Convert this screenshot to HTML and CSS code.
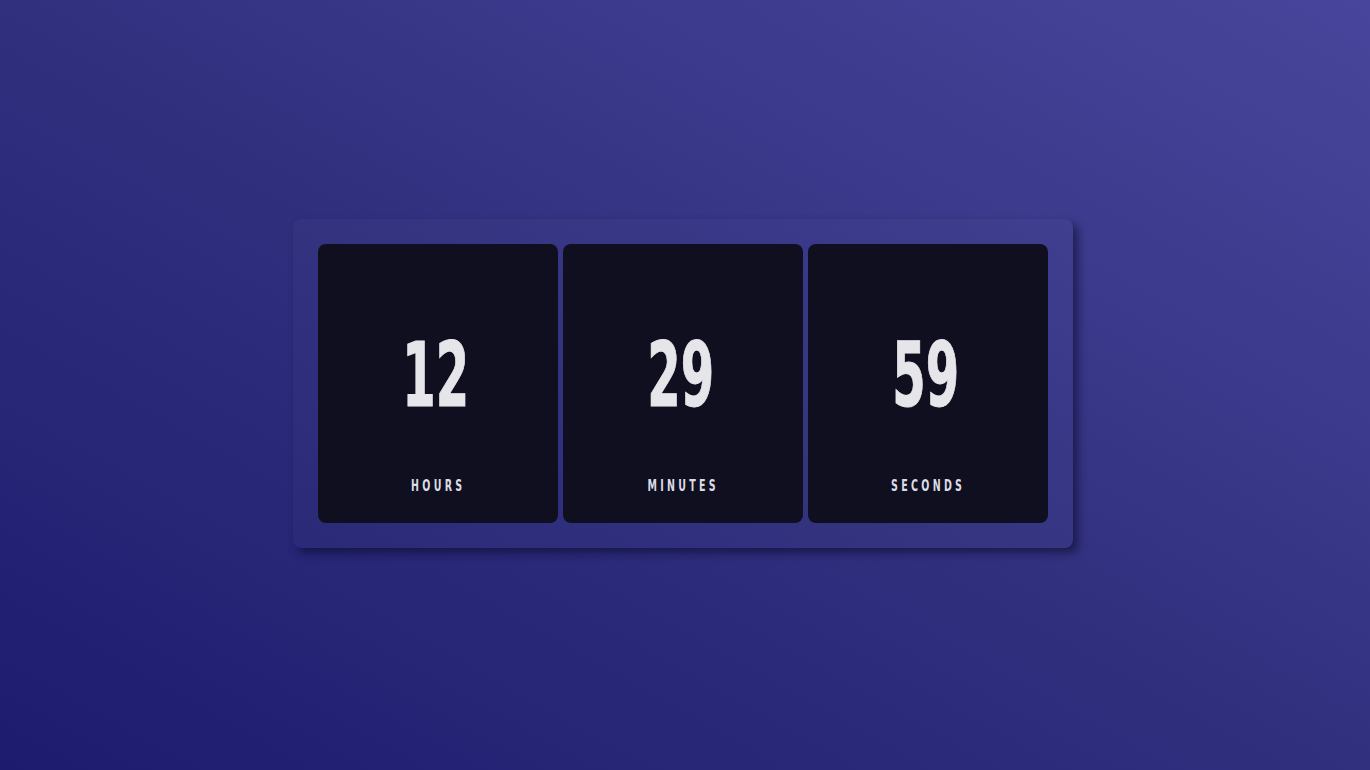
FILE: index.html
```html
<!DOCTYPE html>
<html lang="en">
<head>
<meta charset="utf-8">
<title>Countdown</title>
<link rel="stylesheet" href="styles.css">
</head>
<body>
  <main class="clock">
    <section class="card">
      <div class="num"><span class="num-inner">12</span></div>
      <div class="label"><span class="label-inner">HOURS</span></div>
    </section>
    <section class="card">
      <div class="num"><span class="num-inner">29</span></div>
      <div class="label"><span class="label-inner">MINUTES</span></div>
    </section>
    <section class="card">
      <div class="num"><span class="num-inner">59</span></div>
      <div class="label"><span class="label-inner">SECONDS</span></div>
    </section>
  </main>
</body>
</html>
```

FILE: styles.css
```css
html, body {
  margin: 0;
  padding: 0;
  height: 100%;
}
body {
  background: linear-gradient(to top right, #1c1b6e 0%, #31307f 50%, #48469c 100%);
  display: flex;
  align-items: center;
  justify-content: center;
  font-family: "DejaVu Sans", sans-serif;
  font-stretch: condensed;
}
.clock {
  display: flex;
  gap: 5px;
  padding: 25px;
  border-radius: 8px;
  background: rgba(255, 255, 255, 0.02);
  box-shadow: 5px 5px 8px rgba(5, 5, 30, 0.5);
  margin-top: -4px;
  margin-left: -4px;
}
.card {
  width: 240px;
  height: 279px;
  border-radius: 8px;
  background: #0f0f1f;
  display: flex;
  flex-direction: column;
  align-items: center;
  box-sizing: border-box;
  padding-top: 87px;
}
.num {
  height: 90px;
  display: flex;
  justify-content: center;
  align-items: center;
}
.num-inner {
  display: inline-block;
  font-weight: bold;
  font-size: 89px;
  line-height: 1;
  color: #e6e6ea;
  transform: scaleX(0.6);
  -webkit-text-stroke: 1px #e6e6ea;
  margin-left: -4px;
}
.label {
  margin-top: 57px;
  display: flex;
  justify-content: center;
}
.label-inner {
  display: inline-block;
  font-weight: bold;
  font-size: 16px;
  line-height: 1;
  letter-spacing: 5px;
  margin-right: -5px;
  margin-left: -4px;
  color: #dcdce4;
  transform: scaleX(0.66);
}
```
